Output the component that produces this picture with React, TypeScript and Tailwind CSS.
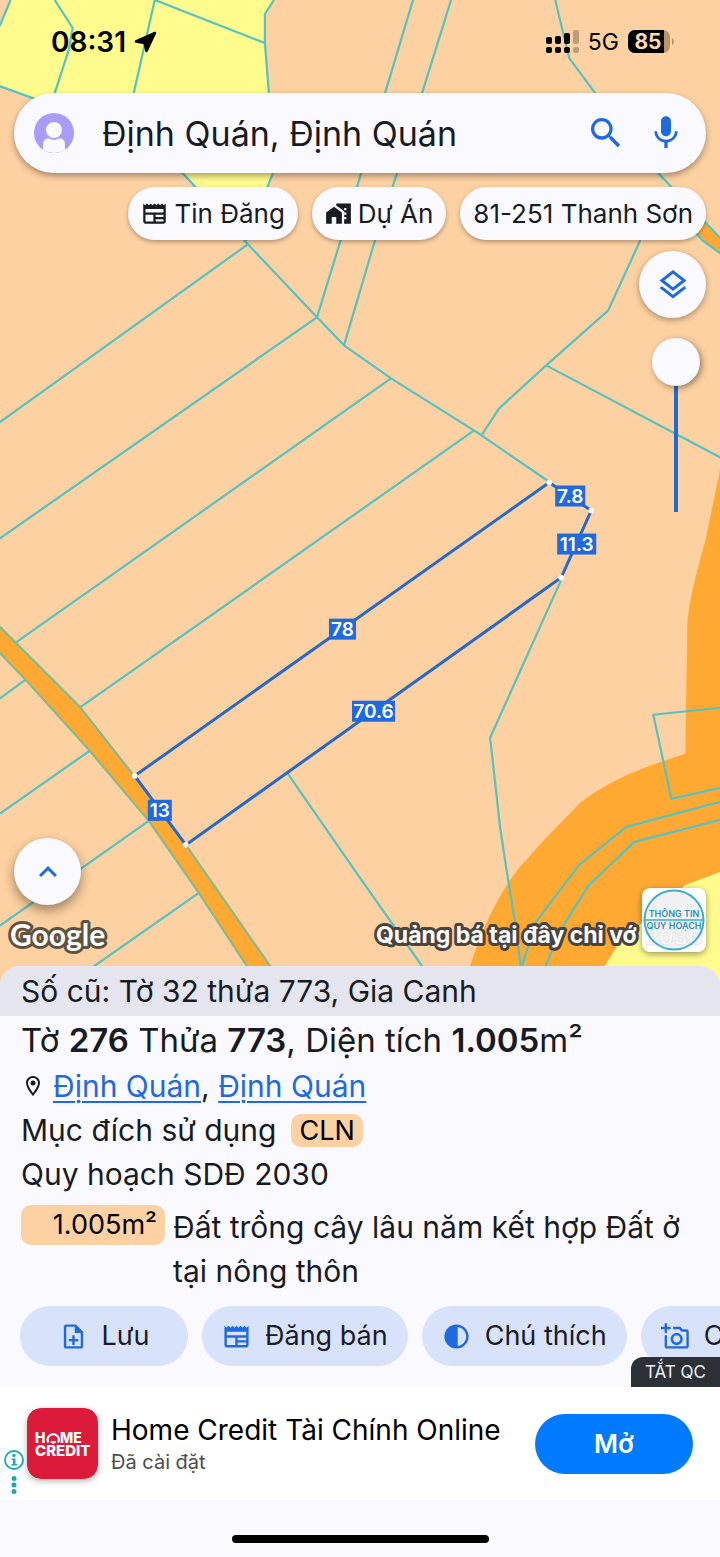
import React, { useState } from 'react';
import {
  MdContrast,
  MdHomeWork,
  MdKeyboardArrowUp,
  MdMic,
  MdNewspaper,
  MdOutlineAddAPhoto,
  MdOutlineLayers,
  MdOutlineLocationOn,
  MdOutlineNoteAdd,
  MdSearch,
} from 'react-icons/md';

const boundaries = [
  '11,0 0,26',
  '55,0 73,28 69,50 55,93',
  '155,0 134,93',
  '155,0 265,43',
  '274,0 265,14 265,43 269,93 273,173 246,241',
  '0,86 33,98 80,113 183,173 248,244 317,317 344,345 391,378 477,432 550,482',
  '413,0 385,93 360,177 317,317',
  '451,0 422,93 397,173 375,240 344,345',
  '555,0 569,58 595,93 658,173 720,238',
  '690,226 702,240 720,253',
  '640,240 608,310 546,365 499,408 482,434',
  '546,365 720,457',
  '248,244 0,422',
  '317,317 0,538',
  '391,378 16,642',
  '474,430 80,707',
  '26,679 0,698',
  '90,750 0,813',
  '149,820 0,925',
  '199,892 66,985',
  '562,577 490,737 500,827 507,873 515,922 523,985',
  '288,773 360,877 436,985',
  '720,707 653,714 671,798 720,787',
  '720,801 626,826 579,864 535,922 516,985',
  '720,819 634,841 588,885 560,930 537,985',
];

const corners = [
  [549, 482],
  [591, 510],
  [561, 577],
  [186, 844],
  [135, 775],
];

const lengths = [
  { label: '7.8', x: 555, y: 485, w: 30 },
  { label: '11.3', x: 557, y: 533, w: 39 },
  { label: '78', x: 329, y: 618, w: 27 },
  { label: '70.6', x: 352, y: 700, w: 43 },
  { label: '13', x: 148, y: 799, w: 24 },
];

function ParcelMap() {
  return (
    <svg
      className="absolute inset-0 h-full w-full"
      viewBox="0 0 720 985"
      preserveAspectRatio="xMidYMax slice"
      aria-hidden="true"
    >
      <rect width="720" height="985" fill="#fdd1a1" />
      <path
        d="M11 0H274L265 14V43L269 93L273 173L246 241L183 173L80 113L33 98L0 86V26Z"
        fill="#fffb8c"
      />
      {/* river and roads */}
      <path
        d="M720 468L705 540C694 580 688 605 687 625L685 753C650 764 610 778 580 802L545 838L518 868C495 898 478 935 464 985H720Z"
        fill="#ffa933"
      />
      <path d="M720 871L685 884L650 915L620 940L592 985H720Z" fill="#fffb8c" />
      <path d="M690 207L720 238V253L702 240L690 226Z" fill="#ffa933" />
      <path
        d="M0 626L80 706L135 776L186 844L284 985H260L199 892L149 820L90 750L26 679L0 652Z"
        fill="#ffa933"
      />
      <g fill="none" stroke="#53c3c4" strokeWidth="2.2" strokeLinejoin="round">
        {boundaries.map((points) => (
          <polyline key={points} points={points} />
        ))}
      </g>
      <g fill="none" stroke="#86b98c" strokeWidth="2.2">
        <polyline points="0,626 80,706 135,776 186,844 284,985" />
        <polyline points="0,652 26,679 90,750 149,820 199,892 260,985" />
      </g>
      {/* selected parcel */}
      <polygon
        points={corners.map((c) => c.join(',')).join(' ')}
        fill="none"
        stroke="#2369cf"
        strokeWidth="3"
      />
      {corners.map(([x, y]) => (
        <circle key={x} cx={x} cy={y} r="2.8" fill="#fff" />
      ))}
      {lengths.map(({ label, x, y, w }) => (
        <g key={label}>
          <rect x={x} y={y} width={w} height="21" fill="#1f6ae0" />
          <text
            x={x + w / 2}
            y={y + 17}
            fill="#fff"
            fontSize="19"
            fontWeight="600"
            textAnchor="middle"
          >
            {label}
          </text>
        </g>
      ))}
    </svg>
  );
}

function StatusBar() {
  return (
    <div className="flex h-[93px] items-start justify-between pt-6 pr-[46px] pl-[51px]">
      <div className="flex h-9 items-center gap-2 text-[28px] font-semibold text-black">
        08:31
        <svg className="size-[23px]" viewBox="0 0 23 23">
          <path
            d="M21 2L12.500 20L10.800 13.200Q10.500 12 9.300 11.800L2 10.500Z"
            stroke="#000"
            strokeWidth="2.500"
            strokeLinejoin="round"
          />
        </svg>
      </div>
      <div className="flex h-9 items-center gap-[9px]">
        <svg className="h-6 w-[34px]" viewBox="0 0 34 24">
          <rect x="1" y="7" width="6" height="7" rx="2" />
          <rect x="10" y="6" width="6" height="8" rx="2" />
          <rect x="19" y="3" width="6" height="11" rx="2" />
          <rect x="28" y="0" width="6" height="14" rx="2" opacity=".25" />
          <rect x="1" y="17" width="6" height="6" rx="2" />
          <rect x="10" y="17" width="6" height="6" rx="2" />
          <rect x="19" y="17" width="6" height="6" rx="2" />
          <rect x="28" y="17" width="6" height="6" rx="2" opacity=".25" />
        </svg>
        <span className="text-[23px] text-black">5G</span>
        <svg className="h-6 w-[46px]" viewBox="0 0 46 24">
          <rect width="42" height="23" rx="7" fill="#b8936c" />
          <path d="M7 0H36V23H7A7 7 0 0 1 0 16V7A7 7 0 0 1 7 0Z" fill="#000" />
          <path d="M44 8Q46 9 46 11.500T44 15Z" fill="#b8936c" />
          <text x="20" y="19" fill="#fdd9b0" fontSize="21" fontWeight="700" textAnchor="middle">
            85
          </text>
        </svg>
      </div>
    </div>
  );
}

function SearchBar() {
  const [query, setQuery] = useState('Định Quán, Định Quán');

  return (
    <form
      role="search"
      className="flex h-20 items-center rounded-full bg-[#faf9ff] px-5 shadow-[0_3px_6px_rgba(0,0,0,0.35)]"
      onSubmit={(e) => e.preventDefault()}
    >
      <button type="button" aria-label="Tài khoản">
        <svg className="size-10" viewBox="0 0 40 40">
          <circle cx="20" cy="20" r="20" fill="#ab9bfb" />
          <path d="M9 37V32Q9 25 16 25H24Q31 25 31 32V37Q20 43 9 37Z" fill="#faf9ff" />
          <circle cx="20" cy="17" r="9" fill="#faf9ff" stroke="#ab9bfb" strokeWidth="2" />
        </svg>
      </button>
      <input
        aria-label="Tìm kiếm"
        className="ml-7 min-w-0 flex-1 bg-transparent text-[34px] text-[#191b23] outline-none"
        value={query}
        onChange={(e) => setQuery(e.target.value)}
      />
      <button type="submit" aria-label="Tìm" className="mr-5 text-[#1f6ae0]">
        <MdSearch className="size-10" />
      </button>
      <button type="button" aria-label="Giọng nói" className="text-[#1f6ae0]">
        <MdMic className="size-10" />
      </button>
    </form>
  );
}

function Chip({ icon, children }: { icon?: React.ReactNode; children: React.ReactNode }) {
  return (
    <button
      type="button"
      className="flex h-[53px] items-center gap-[6px] rounded-full bg-[#faf9ff] px-[13px] text-[26px] whitespace-nowrap text-[#191b23] shadow-[0_2px_4px_rgba(0,0,0,0.3)]"
    >
      {icon}
      {children}
    </button>
  );
}

function ActionButton({ icon, children }: { icon: React.ReactNode; children: React.ReactNode }) {
  return (
    <button
      type="button"
      className="flex h-[60px] min-w-[168px] shrink-0 items-center justify-center gap-[14px] rounded-full bg-[#d8e2fb] px-5 text-[27px] whitespace-nowrap text-[#191b2c]"
    >
      <span className="text-[29px] text-[#1f6ae0]">{icon}</span>
      {children}
    </button>
  );
}

function MapFooter() {
  return (
    <div className="mt-auto pb-[34px]">
      <button
        type="button"
        aria-label="Mở rộng"
        className="flex size-[67px] items-center justify-center rounded-full bg-[#faf9ff] text-[#1f6ae0] shadow-[0_5px_12px_rgba(0,0,0,0.4)]"
      >
        <MdKeyboardArrowUp className="size-9" />
      </button>
      <div className="-mt-[17px] flex items-end justify-between">
        <svg className="-ml-2 h-11 w-[110px] overflow-visible" viewBox="0 0 110 44" aria-label="Google">
          <text
            x="4"
            y="38"
            fill="#fff"
            stroke="#60523f"
            strokeWidth="6"
            strokeLinejoin="round"
            paintOrder="stroke"
            fontFamily="Lato, sans-serif"
            fontSize="30"
            fontWeight="700"
          >
            Google
          </text>
        </svg>
        <div className="flex items-end">
          <svg className="h-11 w-[270px]" viewBox="0 0 270 44">
            <text
              x="4"
              y="35"
              fill="#fff"
              stroke="#48443f"
              strokeWidth="6"
              strokeLinejoin="round"
              paintOrder="stroke"
              fontSize="23"
              fontWeight="700"
            >
              Quảng bá tại đây chỉ vớ
            </text>
          </svg>
          <a href="#quy-hoach" aria-label="Thông tin quy hoạch">
            <svg className="size-16 rounded-lg shadow-[0_2px_6px_rgba(0,0,0,0.4)]" viewBox="0 0 64 64">
              <rect width="64" height="64" rx="8" fill="#fff" />
              <circle cx="32" cy="32" r="29.500" fill="#f1f1f3" />
              <text x="3" y="57" fill="#fbfbfc" stroke="#e6e6e9" strokeWidth="1" fontSize="22" fontWeight="700">
                2030
              </text>
              <circle cx="32" cy="32" r="29.500" fill="none" stroke="#3cacd0" strokeWidth="2" />
              <path d="M3 32H61" stroke="#3cacd0" strokeWidth="1.500" />
              <g fill="#2e8fb8" fontSize="9" fontWeight="600" textAnchor="middle">
                <text x="32" y="29">THÔNG TIN</text>
                <text x="32" y="41">QUY HOẠCH</text>
              </g>
            </svg>
          </a>
        </div>
      </div>
    </div>
  );
}

function ParcelSheet() {
  return (
    <section className="relative -mt-5 overflow-hidden rounded-t-[20px] bg-[#faf9ff] pb-[21px] text-[30px] leading-[44px] text-[#191b23]">
      <p className="bg-[#e5e5ef] px-[21px] py-[3px]">Số cũ: Tờ 32 thửa 773, Gia Canh</p>
      <div className="px-[21px]">
        <h1 className="text-[33px] leading-[48px]">
          Tờ <b className="font-semibold">276</b> Thửa <b className="font-semibold">773</b>, Diện tích{' '}
          <b className="font-semibold">1.005</b>m²
        </h1>
        <p className="flex items-center">
          <MdOutlineLocationOn className="mr-2 size-6" />
          <span>
            <a href="#dinh-quan" className="text-[#1f6ae0] underline decoration-2 underline-offset-4">
              Định Quán
            </a>
            ,{' '}
            <a href="#dinh-quan" className="text-[#1f6ae0] underline decoration-2 underline-offset-4">
              Định Quán
            </a>
          </span>
        </p>
        <p className="flex items-center gap-[15px]">
          Mục đích sử dụng
          <span className="rounded-[10px] bg-[#fdd1a1] px-2 text-[27px] leading-[33px] text-black">CLN</span>
        </p>
        <p>Quy hoạch SDĐ 2030</p>
        <div className="mt-[9px] flex items-start gap-2">
          <span className="w-[144px] shrink-0 rounded-[10px] bg-[#fdd1a1] pr-2 text-right text-[27px] leading-10 text-black">
            1.005m²
          </span>
          <p>Đất trồng cây lâu năm kết hợp Đất ở tại nông thôn</p>
        </div>
      </div>
      <div className="mt-[13px] flex gap-[14px] overflow-hidden pl-5">
        <ActionButton icon={<MdOutlineNoteAdd />}>Lưu</ActionButton>
        <ActionButton icon={<MdNewspaper />}>Đăng bán</ActionButton>
        <ActionButton icon={<MdContrast />}>Chú thích</ActionButton>
        <ActionButton icon={<MdOutlineAddAPhoto />}>Chụp ảnh</ActionButton>
      </div>
      <button
        type="button"
        className="absolute right-0 bottom-0 rounded-tl-xl bg-[#2e3038] px-[14px] text-[17px] leading-[30px] text-[#f0f0f8]"
      >
        TẮT QC
      </button>
    </section>
  );
}

function AdBanner() {
  return (
    <aside className="flex items-center bg-white py-[21px] pr-[27px] pl-1">
      <svg className="-mb-4 h-12 w-5 self-end" viewBox="0 0 20 48" fill="#1ba9b8">
        <circle cx="10" cy="13" r="9" fill="none" stroke="#1ba9b8" strokeWidth="1.800" />
        <circle cx="10" cy="8.500" r="1.700" />
        <path d="M7.500 11.500H11.500V17H13V18.500H7.500V17H9V13H7.500Z" />
        <circle cx="10" cy="31.500" r="2.500" />
        <circle cx="10" cy="38" r="2.500" />
        <circle cx="10" cy="44.500" r="2.500" />
      </svg>
      <svg className="ml-[3px] size-[71px] rounded-[14px] shadow-[0_2px_6px_rgba(0,0,0,0.3)]" viewBox="0 0 71 71">
        <rect width="71" height="71" rx="14" fill="#dc1a3a" />
        <g fill="#fff" fontSize="14" fontWeight="800">
          <text x="8" y="35">H</text>
          <text x="33" y="35">ME</text>
          <text x="8" y="48" fontSize="15">CREDIT</text>
        </g>
        <path
          d="M21.500 34.500A5.500 5.500 0 1 1 31 34.500M24 33.500Q26.200 35.500 28.500 33.500"
          fill="none"
          stroke="#fff"
          strokeWidth="2.200"
        />
      </svg>
      <div className="ml-[13px] min-w-0 flex-1">
        <h2 className="text-[28px] leading-9 whitespace-nowrap text-black">Home Credit Tài Chính Online</h2>
        <p className="text-xl leading-7 text-[#4c4c4c]">Đã cài đặt</p>
      </div>
      <button type="button" className="h-[60px] w-[158px] shrink-0 rounded-full bg-[#007aff] text-[26px] font-semibold text-white">
        Mở
      </button>
    </aside>
  );
}

export default function App() {
  const [opacity, setOpacity] = useState(0);

  return (
    <main className="flex min-h-screen flex-col overflow-hidden bg-[#faf9ff] font-[Inter,'Noto_Sans',sans-serif]">
      <section className="relative flex flex-1 flex-col">
        <ParcelMap />
        <div className="relative flex flex-1 flex-col">
          <StatusBar />
          <div className="flex flex-1 flex-col px-[14px]">
            <SearchBar />
            <div className="mt-[14px] flex justify-end gap-[14px]">
              <Chip icon={<MdNewspaper className="size-[27px]" />}>Tin Đăng</Chip>
              <Chip icon={<MdHomeWork className="size-[27px]" />}>Dự Án</Chip>
              <Chip>81-251 Thanh Sơn</Chip>
            </div>
            <div className="mt-[11px] flex flex-col items-end">
              <button
                type="button"
                aria-label="Lớp bản đồ"
                className="flex size-[67px] items-center justify-center rounded-full bg-[#faf9ff] text-[#1f6ae0] shadow-[0_2px_6px_rgba(0,0,0,0.35)]"
              >
                <MdOutlineLayers className="size-9" />
              </button>
              <input
                type="range"
                aria-label="Độ mờ"
                min={0}
                max={100}
                value={opacity}
                onChange={(e) => setOpacity(Number(e.target.value))}
                className="mt-5 mr-[6px] h-[174px] w-12 appearance-none bg-[linear-gradient(#2369cf,#2369cf)] bg-[length:4px_100%] bg-center bg-no-repeat [writing-mode:vertical-lr] [&::-webkit-slider-thumb]:size-12 [&::-webkit-slider-thumb]:appearance-none [&::-webkit-slider-thumb]:rounded-full [&::-webkit-slider-thumb]:bg-[#faf9ff] [&::-webkit-slider-thumb]:shadow-[2px_2px_6px_rgba(0,0,0,0.4)]"
              />
            </div>
            <MapFooter />
          </div>
        </div>
      </section>
      <ParcelSheet />
      <AdBanner />
      <footer className="flex h-[57px] items-end justify-center pb-[14px]">
        <span className="h-2 w-[257px] rounded-full bg-black" />
      </footer>
    </main>
  );
}
